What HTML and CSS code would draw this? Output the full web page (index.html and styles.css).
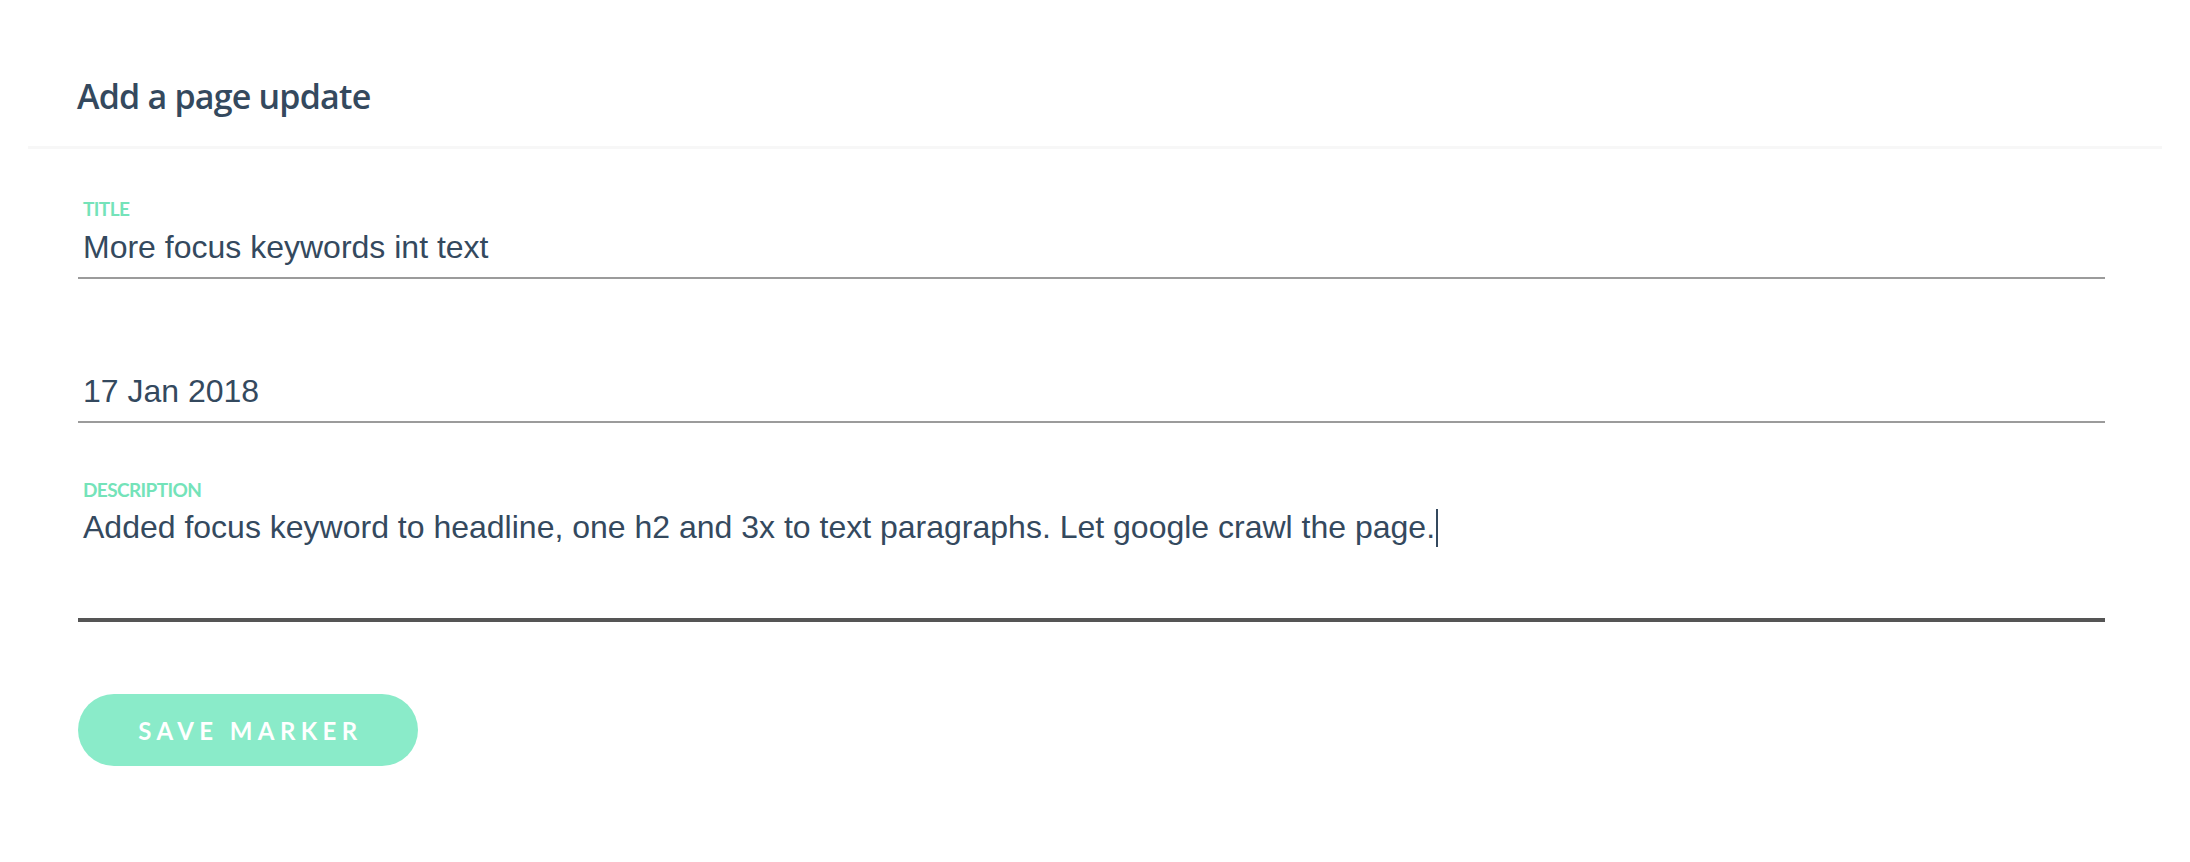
FILE: index.html
```html
<!DOCTYPE html>
<html lang="en">
<head>
<meta charset="utf-8">
<title>Add a page update</title>
<link rel="stylesheet" href="styles.css">
</head>
<body>
<div class="panel">
  <header class="panel-head">
    <h1 class="panel-title">Add a page update</h1>
  </header>
  <div class="divider"></div>
  <form class="form">
    <div class="field field-title">
      <label class="field-label">Title</label>
      <div class="field-input">More focus keywords int text</div>
    </div>
    <div class="field field-date">
      <div class="field-input">17 Jan 2018</div>
    </div>
    <div class="field field-desc">
      <label class="field-label">Description</label>
      <div class="field-input field-textarea">Added focus keyword to headline, one h2 and 3x to text paragraphs. Let google crawl the page.<span class="caret"></span></div>
    </div>
    <button type="button" class="btn-save">Save marker</button>
  </form>
</div>
</body>
</html>
```

FILE: styles.css
```css
html, body {
  margin: 0;
  padding: 0;
  background: #ffffff;
}

body {
  width: 2190px;
  height: 862px;
  overflow: hidden;
  color: #34495e;
  font-family: "Liberation Sans", Arial, sans-serif;
}

.panel-head {
  height: 146px;
  box-sizing: border-box;
  padding: 75px 0 0 77px;
}

.panel-title {
  margin: 0;
  font-family: "Open Sans", Lato, sans-serif;
  font-weight: 600;
  font-size: 34px;
  line-height: 42px;
  color: #34495e;
  letter-spacing: -0.8px;
}

.divider {
  height: 3px;
  margin: 0 28px;
  background: #f7f7f7;
}

.form {
  display: flex;
  flex-direction: column;
  align-items: stretch;
  padding: 50px 85px 0 78px;
}

.field-label {
  display: block;
  font-family: Lato, "Open Sans", sans-serif;
  font-weight: 700;
  font-size: 19px;
  line-height: 20px;
  text-transform: uppercase;
  color: #74e3b9;
  letter-spacing: -0.6px;
  padding-left: 5px;
  margin-bottom: 8px;
}

.field-input {
  font-family: "Liberation Sans", Arial, sans-serif;
  font-size: 32px;
  line-height: 40px;
  color: #34495e;
  padding: 0 5px 10px 5px;
  border-bottom: 2px solid #9b9b9b;
}

.field-date {
  margin-top: 92px;
}

.field-desc {
  margin-top: 57px;
}

.field-desc .field-label {
  margin-bottom: 7px;
}

.field-textarea {
  box-sizing: border-box;
  height: 115px;
  padding-bottom: 0;
  border-bottom: 4px solid #555555;
}

.caret {
  display: inline-block;
  width: 2px;
  height: 38px;
  margin-left: 1px;
  vertical-align: -9px;
  background: #34495e;
}

.btn-save {
  align-self: flex-start;
  margin-top: 72px;
  width: 340px;
  height: 72px;
  border: none;
  border-radius: 36px;
  background: #8aebc9;
  color: #ffffff;
  font-family: Lato, "Open Sans", sans-serif;
  font-weight: 700;
  font-size: 24px;
  letter-spacing: 5.4px;
  text-transform: uppercase;
  padding: 0 0 0 5px;
  cursor: pointer;
}
```
